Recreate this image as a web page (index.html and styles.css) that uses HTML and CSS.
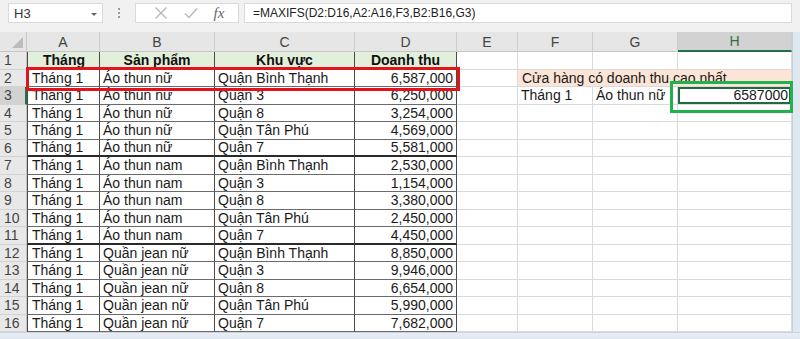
FILE: index.html
```html
<!DOCTYPE html>
<html lang="vi">
<head>
<meta charset="utf-8">
<link rel="stylesheet" href="styles.css">
</head>
<body>
<div class="app">
  <div class="toolbar">
    <div class="namebox"><span>H3</span><span class="caret"></span></div>
    <div class="dots"><i></i><i></i><i></i></div>
    <div class="btns">
      <svg class="ico" width="14" height="14" viewBox="0 0 14 14"><path d="M1.5 1.5L12.5 12.5M12.5 1.5L1.5 12.5" stroke="#b8b8b8" stroke-width="1.4" fill="none"/></svg>
      <svg class="ico" width="16" height="14" viewBox="0 0 16 14"><path d="M2 7.5L6 11.5L14 2.5" stroke="#b8b8b8" stroke-width="1.4" fill="none"/></svg>
      <span class="fx">fx</span>
    </div>
    <div class="formula">=MAXIFS(D2:D16,A2:A16,F3,B2:B16,G3)</div>
  </div>
  <div class="sheet">
    <div class="corner"><span class="tri"></span></div>
    <div class="ch">A</div><div class="ch">B</div><div class="ch">C</div><div class="ch">D</div><div class="ch">E</div><div class="ch">F</div><div class="ch">G</div><div class="ch sel">H</div><div class="edge"></div>

    <div class="rh">1</div><div class="c t hd la">Tháng</div><div class="c t hd">Sản phẩm</div><div class="c t hd">Khu vực</div><div class="c t hd">Doanh thu</div><div class="c"></div><div class="c"></div><div class="c"></div><div class="c"></div><div class="edge"></div>

    <div class="rh">2</div><div class="c t la">Tháng 1</div><div class="c t">Áo thun nữ</div><div class="c t">Quận Bình Thạnh</div><div class="c t n">6,587,000</div><div class="c"></div><div class="c peach">Cửa hàng có doanh thu cao nhất</div><div class="edge"></div>

    <div class="rh rsel">3</div><div class="c t la">Tháng 1</div><div class="c t">Áo thun nữ</div><div class="c t">Quận 3</div><div class="c t n">6,250,000</div><div class="c"></div><div class="c">Tháng 1</div><div class="c">Áo thun nữ</div><div class="c n active">6587000</div><div class="edge"></div>

    <div class="rh">4</div><div class="c t la">Tháng 1</div><div class="c t">Áo thun nữ</div><div class="c t">Quận 8</div><div class="c t n">3,254,000</div><div class="c"></div><div class="c"></div><div class="c"></div><div class="c"></div><div class="edge"></div>

    <div class="rh">5</div><div class="c t la">Tháng 1</div><div class="c t">Áo thun nữ</div><div class="c t">Quận Tân Phú</div><div class="c t n">4,569,000</div><div class="c"></div><div class="c"></div><div class="c"></div><div class="c"></div><div class="edge"></div>

    <div class="rh">6</div><div class="c t la g">Tháng 1</div><div class="c t g">Áo thun nữ</div><div class="c t g">Quận 7</div><div class="c t n g">5,581,000</div><div class="c"></div><div class="c"></div><div class="c"></div><div class="c"></div><div class="edge"></div>

    <div class="rh">7</div><div class="c t la">Tháng 1</div><div class="c t">Áo thun nam</div><div class="c t">Quận Bình Thạnh</div><div class="c t n">2,530,000</div><div class="c"></div><div class="c"></div><div class="c"></div><div class="c"></div><div class="edge"></div>

    <div class="rh">8</div><div class="c t la">Tháng 1</div><div class="c t">Áo thun nam</div><div class="c t">Quận 3</div><div class="c t n">1,154,000</div><div class="c"></div><div class="c"></div><div class="c"></div><div class="c"></div><div class="edge"></div>

    <div class="rh">9</div><div class="c t la">Tháng 1</div><div class="c t">Áo thun nam</div><div class="c t">Quận 8</div><div class="c t n">3,380,000</div><div class="c"></div><div class="c"></div><div class="c"></div><div class="c"></div><div class="edge"></div>

    <div class="rh">10</div><div class="c t la">Tháng 1</div><div class="c t">Áo thun nam</div><div class="c t">Quận Tân Phú</div><div class="c t n">2,450,000</div><div class="c"></div><div class="c"></div><div class="c"></div><div class="c"></div><div class="edge"></div>

    <div class="rh">11</div><div class="c t la g">Tháng 1</div><div class="c t g">Áo thun nam</div><div class="c t g">Quận 7</div><div class="c t n g">4,450,000</div><div class="c"></div><div class="c"></div><div class="c"></div><div class="c"></div><div class="edge"></div>

    <div class="rh">12</div><div class="c t la">Tháng 1</div><div class="c t">Quần jean nữ</div><div class="c t">Quận Bình Thạnh</div><div class="c t n">8,850,000</div><div class="c"></div><div class="c"></div><div class="c"></div><div class="c"></div><div class="edge"></div>

    <div class="rh">13</div><div class="c t la">Tháng 1</div><div class="c t">Quần jean nữ</div><div class="c t">Quận 3</div><div class="c t n">9,946,000</div><div class="c"></div><div class="c"></div><div class="c"></div><div class="c"></div><div class="edge"></div>

    <div class="rh">14</div><div class="c t la">Tháng 1</div><div class="c t">Quần jean nữ</div><div class="c t">Quận 8</div><div class="c t n">6,654,000</div><div class="c"></div><div class="c"></div><div class="c"></div><div class="c"></div><div class="edge"></div>

    <div class="rh">15</div><div class="c t la">Tháng 1</div><div class="c t">Quần jean nữ</div><div class="c t">Quận Tân Phú</div><div class="c t n">5,990,000</div><div class="c"></div><div class="c"></div><div class="c"></div><div class="c"></div><div class="edge"></div>

    <div class="rh">16</div><div class="c t la">Tháng 1</div><div class="c t">Quần jean nữ</div><div class="c t">Quận 7</div><div class="c t n">7,682,000</div><div class="c"></div><div class="c"></div><div class="c"></div><div class="c"></div><div class="edge"></div>

    <div class="bottom"></div>

    <div class="mark red"></div>
    <div class="mark green"></div>
  </div>
</div>
</body>
</html>
```
FILE: styles.css
```css
* { box-sizing: border-box; }
html, body { margin: 0; padding: 0; }
body {
  width: 800px;
  height: 339px;
  overflow: hidden;
  background: #f1f1f1;
  font-family: "Liberation Sans", Arial, sans-serif;
  font-size: 14px;
  color: #1a1a1a;
}
.app { display: flex; flex-direction: column; }
.toolbar {
  height: 32px;
  display: flex;
  align-items: flex-start;
  padding: 3px 8px 0 8px;
  background: #f1f1f1;
}
.namebox {
  width: 95px;
  height: 20px;
  background: #fff;
  border: 1px solid #dadada;
  display: flex;
  align-items: center;
  justify-content: space-between;
  padding: 0 5px 0 5px;
  font-size: 13px;
  color: #333;
}
.caret {
  width: 0; height: 0;
  border-left: 3px solid transparent;
  border-right: 3px solid transparent;
  border-top: 3px solid #666;
  margin-top: 2px;
}
.dots {
  width: 32px;
  height: 20px;
  display: flex;
  flex-direction: column;
  align-items: center;
  justify-content: center;
  gap: 2px;
}
.dots i { display: block; width: 2px; height: 2px; background: #9a9a9a; }
.btns {
  width: 104px;
  height: 20px;
  background: #fff;
  border: 1px solid #dadada;
  display: flex;
  align-items: center;
  justify-content: space-around;
  padding: 0 6px 0 10px;
}
.fx {
  font-family: "Liberation Serif", "Times New Roman", serif;
  font-style: italic;
  font-size: 15px;
  color: #666;
}
.formula {
  flex: 1;
  height: 20px;
  margin-left: 5px;
  background: #fff;
  border: 1px solid #dadada;
  padding: 0 8px;
  font-size: 12px;
  line-height: 18px;
  color: #222;
}
.sheet {
  position: relative;
  display: grid;
  grid-template-columns: 27px 73px 115px 140px 102px 61px 75px 85px 114px 8px;
  grid-template-rows: 20px repeat(16, 17.5px) 7px;
  background: #fff;
}
.corner {
  background: #e6e6e6;
  border-right: 1px solid #c6c6c6;
  border-bottom: 1px solid #c6c6c6;
  position: relative;
}
.tri {
  position: absolute;
  right: 3px;
  bottom: 3px;
  width: 0; height: 0;
  border-left: 11px solid transparent;
  border-bottom: 11px solid #bcbcbc;
}
.ch {
  background: #e6e6e6;
  border-right: 1px solid #cdcdcd;
  border-bottom: 1px solid #c6c6c6;
  display: flex;
  align-items: center;
  justify-content: center;
  font-size: 14px;
  color: #444;
}
.ch.sel {
  background: #d2d2d2;
  color: #2f6e46;
  border-bottom: 2px solid #217346;
}
.edge {
  background: #dfe7f1;
  border-left: 1px solid #c3d0e0;
}
.rh {
  background: #e8e8e8;
  border-right: 1px solid #c6c6c6;
  border-bottom: 1px solid #d3d3d3;
  display: flex;
  align-items: center;
  padding-left: 4px;
  font-size: 14px;
  color: #444;
}
.rh.rsel {
  background: #d2d2d2;
  border-right: 2px solid #217346;
}
.c {
  border-right: 1px solid #dadada;
  border-bottom: 1px solid #dadada;
  display: flex;
  align-items: center;
  padding: 0 3px;
  white-space: nowrap;
  overflow: visible;
  line-height: 1;
}
.c.t {
  border-right: 1px solid #4a4a4a;
  border-bottom: 1px solid #6a6a6a;
}
.c.la { border-left: 1px solid #4a4a4a; padding-left: 4px; }
.c.g { border-bottom: 2px solid #2a2a2a; }
.c.hd {
  background: #e2efda;
  font-weight: bold;
  justify-content: center;
  color: #111;
}
.c.n { justify-content: flex-end; padding-right: 3px; }
.peach {
  grid-column: 7 / 10;
  background: #fce4d6;
  padding-left: 4px;
}
.active {
  box-shadow: inset 0 0 0 2px #1f6b40;
}
.bottom {
  grid-column: 1 / -1;
  background: linear-gradient(#e9eef4, #dfe6ef);
  border-top: 1px solid #c9d3df;
}
.mark {
  position: absolute;
  pointer-events: none;
}
.red {
  left: 26px;
  top: 35px;
  width: 434px;
  height: 24px;
  border: 3px solid #e3121b;
}
.green {
  left: 670px;
  top: 49px;
  width: 123px;
  height: 32px;
  border: 3px solid #22b14c;
}
```
